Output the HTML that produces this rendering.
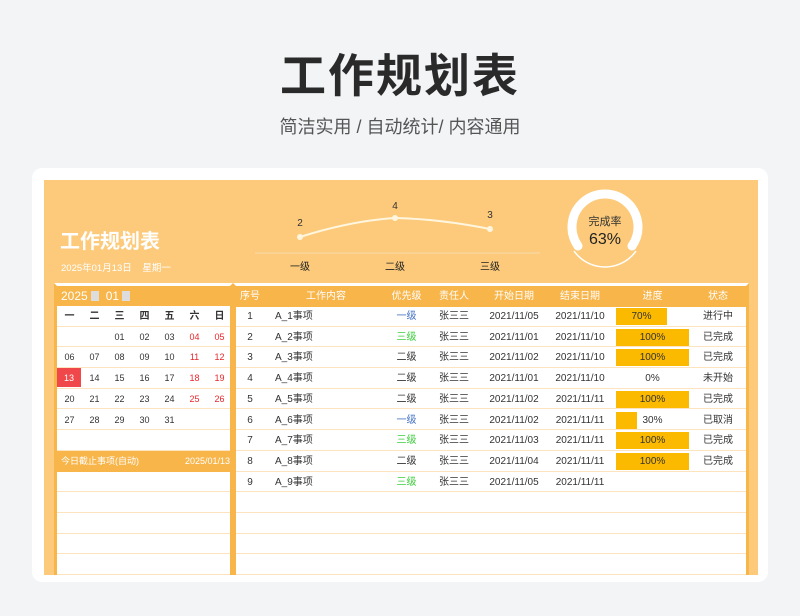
<!DOCTYPE html><html><head><meta charset="utf-8"><style>
*{margin:0;padding:0;box-sizing:border-box}
body{width:800px;height:616px;background:#f2f4f6;font-family:"Liberation Sans","Noto Sans CJK SC",sans-serif;position:relative;overflow:hidden;color:#333}
.a{position:absolute}
.t1{left:0;width:800px;top:40px;text-align:center;font-size:46px;font-weight:bold;color:#2a2a2a;letter-spacing:2px}
.t2{left:0;width:800px;top:113px;text-align:center;font-size:18px;color:#555}
.card{left:32px;top:168px;width:736px;height:414px;background:#fff;border-radius:10px}
.or{left:44px;top:180px;width:714px;height:395px;background:#fcca7a}
.pan{background:#fff;border:3px solid #f7b54a;border-bottom:none;border-top:none}
.hd{background:#f7b54a;color:#fff;font-size:10px;height:20px;line-height:20px}
.row{position:absolute;left:0;right:0;height:20.7px;border-bottom:1px solid #fde3c0;font-size:10px;line-height:21px}
.row span{position:absolute;top:0;text-align:center}
.bar{position:absolute;top:2px;height:17px;background:#fbba00}
.red{color:#e8262b}
</style></head><body>
<div class="a t1">工作规划表</div>
<div class="a t2">简洁实用 / 自动统计/ 内容通用</div>
<div class="a card"></div>
<div class="a or"></div>
<div class="a" style="left:60px;top:225px;font-size:20px;font-weight:bold;color:#fff">工作规划表</div>
<div class="a" style="left:61px;top:260px;font-size:9.5px;color:#fff">2025年01月13日 &nbsp;&nbsp; 星期一</div>
<svg class="a" style="left:250px;top:195px" width="300" height="80">
<line x1="5" y1="58" x2="290" y2="58" stroke="#f3dcae" stroke-width="1"/>
<path d="M50 42 Q100 26 145 23 Q190 24 240 34" stroke="#fff6e0" stroke-width="2" fill="none"/>
<circle cx="50" cy="42" r="3" fill="#fff6e0"/><circle cx="145" cy="23" r="3" fill="#fff6e0"/><circle cx="240" cy="34" r="3" fill="#fff6e0"/>
<text x="50" y="31" font-size="10" text-anchor="middle" fill="#333">2</text>
<text x="145" y="14" font-size="10" text-anchor="middle" fill="#333">4</text>
<text x="240" y="23" font-size="10" text-anchor="middle" fill="#333">3</text>
<text x="50" y="75" font-size="10" text-anchor="middle" fill="#222">一级</text>
<text x="145" y="75" font-size="10" text-anchor="middle" fill="#222">二级</text>
<text x="240" y="75" font-size="10" text-anchor="middle" fill="#222">三级</text>
</svg>
<svg class="a" style="left:560px;top:185px" width="90" height="90">
<path d="M18 61 A33 33 0 1 1 72 61" stroke="#fff" stroke-width="9" fill="none" stroke-linecap="round"/>
<path d="M14 66 A38 38 0 0 0 76 66" stroke="#fff" stroke-width="1.5" fill="none"/>
<text x="45" y="40" font-size="11" text-anchor="middle" fill="#333">完成率</text>
<text x="45" y="59" font-size="16" text-anchor="middle" fill="#222">63%</text>
</svg>
<div class="a pan" style="left:54px;top:283px;width:179px;height:292px;border-top:3px solid #fff"></div>
<div class="a hd" style="left:57px;top:286px;width:173px;font-size:12px;padding-left:4px">2025 <span style="display:inline-block;width:8px;height:10px;background:#ddd;vertical-align:-1px"></span> &nbsp;01 <span style="display:inline-block;width:8px;height:10px;background:#ddd;vertical-align:-1px"></span></div>
<div class="a" style="left:57px;top:306px;width:173px;height:270px">
<div class="row" style="top:0;font-weight:bold"><span style="left:0;width:25px">一</span><span style="left:25px;width:25px">二</span><span style="left:50px;width:25px">三</span><span style="left:75px;width:25px">四</span><span style="left:100px;width:25px">五</span><span style="left:125px;width:25px">六</span><span style="left:150px;width:25px">日</span></div>
<div class="row" style="top:20.7px;font-size:9px"><span style="left:50px;width:25px">01</span><span style="left:75px;width:25px">02</span><span style="left:100px;width:25px">03</span><span class="red" style="left:125px;width:25px">04</span><span class="red" style="left:150px;width:25px">05</span></div>
<div class="row" style="top:41.4px;font-size:9px"><span style="left:0;width:25px">06</span><span style="left:25px;width:25px">07</span><span style="left:50px;width:25px">08</span><span style="left:75px;width:25px">09</span><span style="left:100px;width:25px">10</span><span class="red" style="left:125px;width:25px">11</span><span class="red" style="left:150px;width:25px">12</span></div>
<div class="row" style="top:62.1px;font-size:9px"><span style="left:0;width:24px;background:#f0474a;color:#fff;height:19px">13</span><span style="left:25px;width:25px">14</span><span style="left:50px;width:25px">15</span><span style="left:75px;width:25px">16</span><span style="left:100px;width:25px">17</span><span class="red" style="left:125px;width:25px">18</span><span class="red" style="left:150px;width:25px">19</span></div>
<div class="row" style="top:82.8px;font-size:9px"><span style="left:0;width:25px">20</span><span style="left:25px;width:25px">21</span><span style="left:50px;width:25px">22</span><span style="left:75px;width:25px">23</span><span style="left:100px;width:25px">24</span><span class="red" style="left:125px;width:25px">25</span><span class="red" style="left:150px;width:25px">26</span></div>
<div class="row" style="top:103.5px;font-size:9px"><span style="left:0;width:25px">27</span><span style="left:25px;width:25px">28</span><span style="left:50px;width:25px">29</span><span style="left:75px;width:25px">30</span><span style="left:100px;width:25px">31</span></div>
<div class="row" style="top:124.2px"></div>
<div class="row hd" style="top:144.9px;font-size:9px;border:none"><span style="left:4px">今日截止事项(自动)</span><span style="right:0">2025/01/13</span></div>
<div class="row" style="top:165.6px"></div><div class="row" style="top:186.3px"></div><div class="row" style="top:207px"></div><div class="row" style="top:227.7px"></div><div class="row" style="top:248.4px"></div>
</div>
<div class="a pan" style="left:233px;top:283px;width:516px;height:292px;border-top:3px solid #fff"></div>
<div class="a" style="left:236px;top:286px;width:510px;height:290px;overflow:hidden">
<div class="row hd" style="top:0;border:none"><span style="left:0;width:28px">序号</span><span style="left:28px;width:124px">工作内容</span><span style="left:152px;width:37px">优先级</span><span style="left:189px;width:58px">责任人</span><span style="left:247px;width:62px">开始日期</span><span style="left:309px;width:70px">结束日期</span><span style="left:379px;width:75px">进度</span><span style="left:454px;width:56px">状态</span></div>
<div class="row" style="top:20px"><span style="left:0;width:28px">1</span><span style="left:39px">A_1事项</span><span style="left:152px;width:37px;color:#4472c4">一级</span><span style="left:189px;width:58px">张三三</span><span style="left:247px;width:62px">2021/11/05</span><span style="left:309px;width:70px">2021/11/10</span><div class="bar" style="left:380px;width:51px"></div><span style="left:380px;width:51px">70%</span><span style="left:454px;width:56px">进行中</span></div>
<div class="row" style="top:40.7px"><span style="left:0;width:28px">2</span><span style="left:39px">A_2事项</span><span style="left:152px;width:37px;color:#3ccc3c">三级</span><span style="left:189px;width:58px">张三三</span><span style="left:247px;width:62px">2021/11/01</span><span style="left:309px;width:70px">2021/11/10</span><div class="bar" style="left:380px;width:73px"></div><span style="left:380px;width:73px">100%</span><span style="left:454px;width:56px">已完成</span></div>
<div class="row" style="top:61.4px"><span style="left:0;width:28px">3</span><span style="left:39px">A_3事项</span><span style="left:152px;width:37px">二级</span><span style="left:189px;width:58px">张三三</span><span style="left:247px;width:62px">2021/11/02</span><span style="left:309px;width:70px">2021/11/10</span><div class="bar" style="left:380px;width:73px"></div><span style="left:380px;width:73px">100%</span><span style="left:454px;width:56px">已完成</span></div>
<div class="row" style="top:82.1px"><span style="left:0;width:28px">4</span><span style="left:39px">A_4事项</span><span style="left:152px;width:37px">二级</span><span style="left:189px;width:58px">张三三</span><span style="left:247px;width:62px">2021/11/01</span><span style="left:309px;width:70px">2021/11/10</span><span style="left:380px;width:73px">0%</span><span style="left:454px;width:56px">未开始</span></div>
<div class="row" style="top:102.8px"><span style="left:0;width:28px">5</span><span style="left:39px">A_5事项</span><span style="left:152px;width:37px">二级</span><span style="left:189px;width:58px">张三三</span><span style="left:247px;width:62px">2021/11/02</span><span style="left:309px;width:70px">2021/11/11</span><div class="bar" style="left:380px;width:73px"></div><span style="left:380px;width:73px">100%</span><span style="left:454px;width:56px">已完成</span></div>
<div class="row" style="top:123.5px"><span style="left:0;width:28px">6</span><span style="left:39px">A_6事项</span><span style="left:152px;width:37px;color:#4472c4">一级</span><span style="left:189px;width:58px">张三三</span><span style="left:247px;width:62px">2021/11/02</span><span style="left:309px;width:70px">2021/11/11</span><div class="bar" style="left:380px;width:21px"></div><span style="left:380px;width:73px">30%</span><span style="left:454px;width:56px">已取消</span></div>
<div class="row" style="top:144.2px"><span style="left:0;width:28px">7</span><span style="left:39px">A_7事项</span><span style="left:152px;width:37px;color:#3ccc3c">三级</span><span style="left:189px;width:58px">张三三</span><span style="left:247px;width:62px">2021/11/03</span><span style="left:309px;width:70px">2021/11/11</span><div class="bar" style="left:380px;width:73px"></div><span style="left:380px;width:73px">100%</span><span style="left:454px;width:56px">已完成</span></div>
<div class="row" style="top:164.9px"><span style="left:0;width:28px">8</span><span style="left:39px">A_8事项</span><span style="left:152px;width:37px">二级</span><span style="left:189px;width:58px">张三三</span><span style="left:247px;width:62px">2021/11/04</span><span style="left:309px;width:70px">2021/11/11</span><div class="bar" style="left:380px;width:73px"></div><span style="left:380px;width:73px">100%</span><span style="left:454px;width:56px">已完成</span></div>
<div class="row" style="top:185.6px"><span style="left:0;width:28px">9</span><span style="left:39px">A_9事项</span><span style="left:152px;width:37px;color:#3ccc3c">三级</span><span style="left:189px;width:58px">张三三</span><span style="left:247px;width:62px">2021/11/05</span><span style="left:309px;width:70px">2021/11/11</span></div>
<div class="row" style="top:206.3px"></div><div class="row" style="top:227px"></div><div class="row" style="top:247.7px"></div><div class="row" style="top:268.4px"></div>
</div>
</body></html>
